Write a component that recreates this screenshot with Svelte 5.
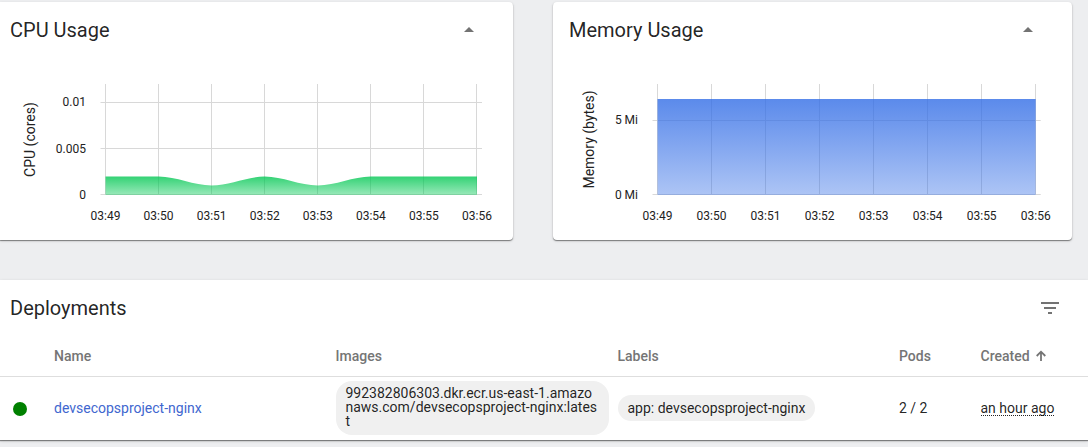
<script>
  const times = ['03:49', '03:50', '03:51', '03:52', '03:53', '03:54', '03:55', '03:56'];

  const charts = [
    {
      id: 'cpu',
      title: 'CPU Usage',
      axis: 'CPU (cores)',
      axisX: 35,
      axisY: 137.5,
      width: 513,
      x0: 105.5,
      step: 53.07,
      labelX: 86,
      color: '#00c752',
      ticks: [
        { y: 102.5, labelY: 106, text: '0.01' },
        { y: 148.5, labelY: 153, text: '0.005' },
        { y: 194.5, labelY: 199, text: '0' }
      ],
      area: 'M105.5 195V176.5H158.6C176.3 176.5 193.9 185.5 211.6 185.5S247 176.5 264.7 176.5S300.1 185.5 317.8 185.5S353.2 176.5 370.8 176.5H477V195Z'
    },
    {
      id: 'memory',
      title: 'Memory Usage',
      axis: 'Memory (bytes)',
      axisX: 41,
      axisY: 137.5,
      width: 519,
      x0: 104.5,
      step: 54.03,
      labelX: 85,
      color: '#326de6',
      ticks: [
        { y: 120.5, labelY: 124, text: '5 Mi' },
        { y: 194.5, labelY: 199, text: '0 Mi' }
      ],
      area: 'M104.5 195V99H482.7V195Z'
    }
  ];
</script>

<main>
  <section class="charts">
    {#each charts as c}
      <article class="card chart {c.id}">
        <header>
          <h2>{c.title}</h2>
          <svg class="caret" width="24" height="24" viewBox="0 0 24 24"><path d="M7 14l5-5 5 5z" /></svg>
        </header>
        <svg class="plot" width={c.width} height="182" viewBox="0 58 {c.width} 182">
          <defs>
            <linearGradient id="{c.id}-fill" x1="0" y1="0" x2="0" y2="1">
              <stop offset="0" stop-color={c.color} stop-opacity="0.8" />
              <stop offset="1" stop-color={c.color} stop-opacity="0.4" />
            </linearGradient>
          </defs>
          {#each c.ticks as t}
            <line class="grid" x1={c.x0 - 5} x2={c.x0 + c.step * 7 + 5} y1={t.y} y2={t.y} />
            <text class="tick" x={c.labelX} y={t.labelY} text-anchor="end">{t.text}</text>
          {/each}
          {#each times as time, i}
            {@const x = Math.floor(c.x0 + i * c.step) + 0.5}
            <line class="grid" x1={x} x2={x} y1="84" y2="195" />
            <text class="tick" x={c.x0 + i * c.step} y="220" text-anchor="middle">{time}</text>
          {/each}
          <path d={c.area} fill="url(#{c.id}-fill)" />
          <text class="axis" text-anchor="middle" transform="translate({c.axisX} {c.axisY + 2}) rotate(-90)">{c.axis}</text>
        </svg>
      </article>
    {/each}
  </section>

  <section class="card deployments">
    <header>
      <h2>Deployments</h2>
      <svg width="24" height="24" viewBox="0 0 24 24"><path d="M10 18h4v-2h-4v2zM3 6v2h18V6H3zm3 7h12v-2H6v2z" /></svg>
    </header>
    <div class="row head">
      <span></span>
      <span>Name</span>
      <span>Images</span>
      <span>Labels</span>
      <span>Pods</span>
      <span class="sorted">
        Created
        <svg width="12" height="12" viewBox="0 0 12 12"><path d="M6 11V2M1.7 6L6 1.7L10.3 6" /></svg>
      </span>
    </div>
    <div class="row body">
      <span class="status"></span>
      <span class="name">devsecopsproject-nginx</span>
      <span><span class="chip image">992382806303.dkr.ecr.us-east-1.amazonaws.com/devsecopsproject-nginx:latest</span></span>
      <span><span class="chip">app: devsecopsproject-nginx</span></span>
      <span>2 / 2</span>
      <span><span class="ago">an hour ago</span></span>
    </div>
  </section>
</main>

<style>
  :global(body) {
    margin: 0;
    background: #edeef0;
  }
  main {
    box-sizing: border-box;
    width: 1088px;
    height: 447px;
    padding-top: 2px;
    overflow: hidden;
    font-family: Roboto, sans-serif;
    font-size: 14px;
    color: rgba(0, 0, 0, 0.87);
  }
  h2 {
    margin: 0;
    font-size: 20px;
    line-height: 24px;
    font-weight: 400;
  }
  header {
    display: flex;
    align-items: center;
    justify-content: space-between;
    box-sizing: border-box;
    height: 56px;
  }
  header svg {
    fill: #737373;
  }
  .card {
    background: #fff;
    box-shadow: 0 1px 1px rgba(0, 0, 0, 0.42), 0 1px 3px rgba(0, 0, 0, 0.16);
  }
  .charts {
    display: flex;
    gap: 40px;
  }
  .chart {
    height: 238px;
    border-radius: 0 4px 4px 0;
  }
  .memory {
    border-radius: 4px;
  }
  .chart header {
    padding: 0 32px 0 10px;
  }
  .memory header {
    padding-left: 16px;
  }
  .plot {
    display: block;
  }
  .grid {
    stroke: #d8d8d8;
    stroke-width: 1;
  }
  .tick {
    font-size: 12px;
    fill: #222;
  }
  .axis {
    font-size: 14px;
    fill: #222;
  }
  .deployments {
    height: 160px;
    margin-top: 40px;
  }
  .deployments header {
    padding: 0 26px 0 10px;
  }
  .row {
    display: grid;
    grid-template-columns: 54px 281.5px 282px 281.5px 81.5px 1fr;
    align-items: center;
  }
  .head {
    box-sizing: border-box;
    height: 41px;
    border-bottom: 1px solid #dedede;
    font-weight: 500;
    color: #757575;
  }
  .sorted {
    display: flex;
    align-items: center;
    gap: 5px;
  }
  .sorted svg {
    fill: none;
    stroke: #757575;
    stroke-width: 1.8;
  }
  .body {
    height: 62px;
  }
  .status {
    width: 14px;
    height: 14px;
    margin: 2px 0 0 13px;
    border-radius: 50%;
    background: #008000;
  }
  .name {
    color: #3f67cf;
  }
  .chip {
    display: block;
    box-sizing: border-box;
    width: fit-content;
    padding: 6px 10px;
    border-radius: 16px;
    background: #f0f0f0;
    line-height: 14px;
  }
  .chip.image {
    width: 273px;
    padding: 5px 10px 7px;
    word-break: break-all;
  }
  .ago {
    display: inline-block;
    line-height: 15px;
    height: 14px;
    border-bottom: 1px dotted #222;
  }
</style>
